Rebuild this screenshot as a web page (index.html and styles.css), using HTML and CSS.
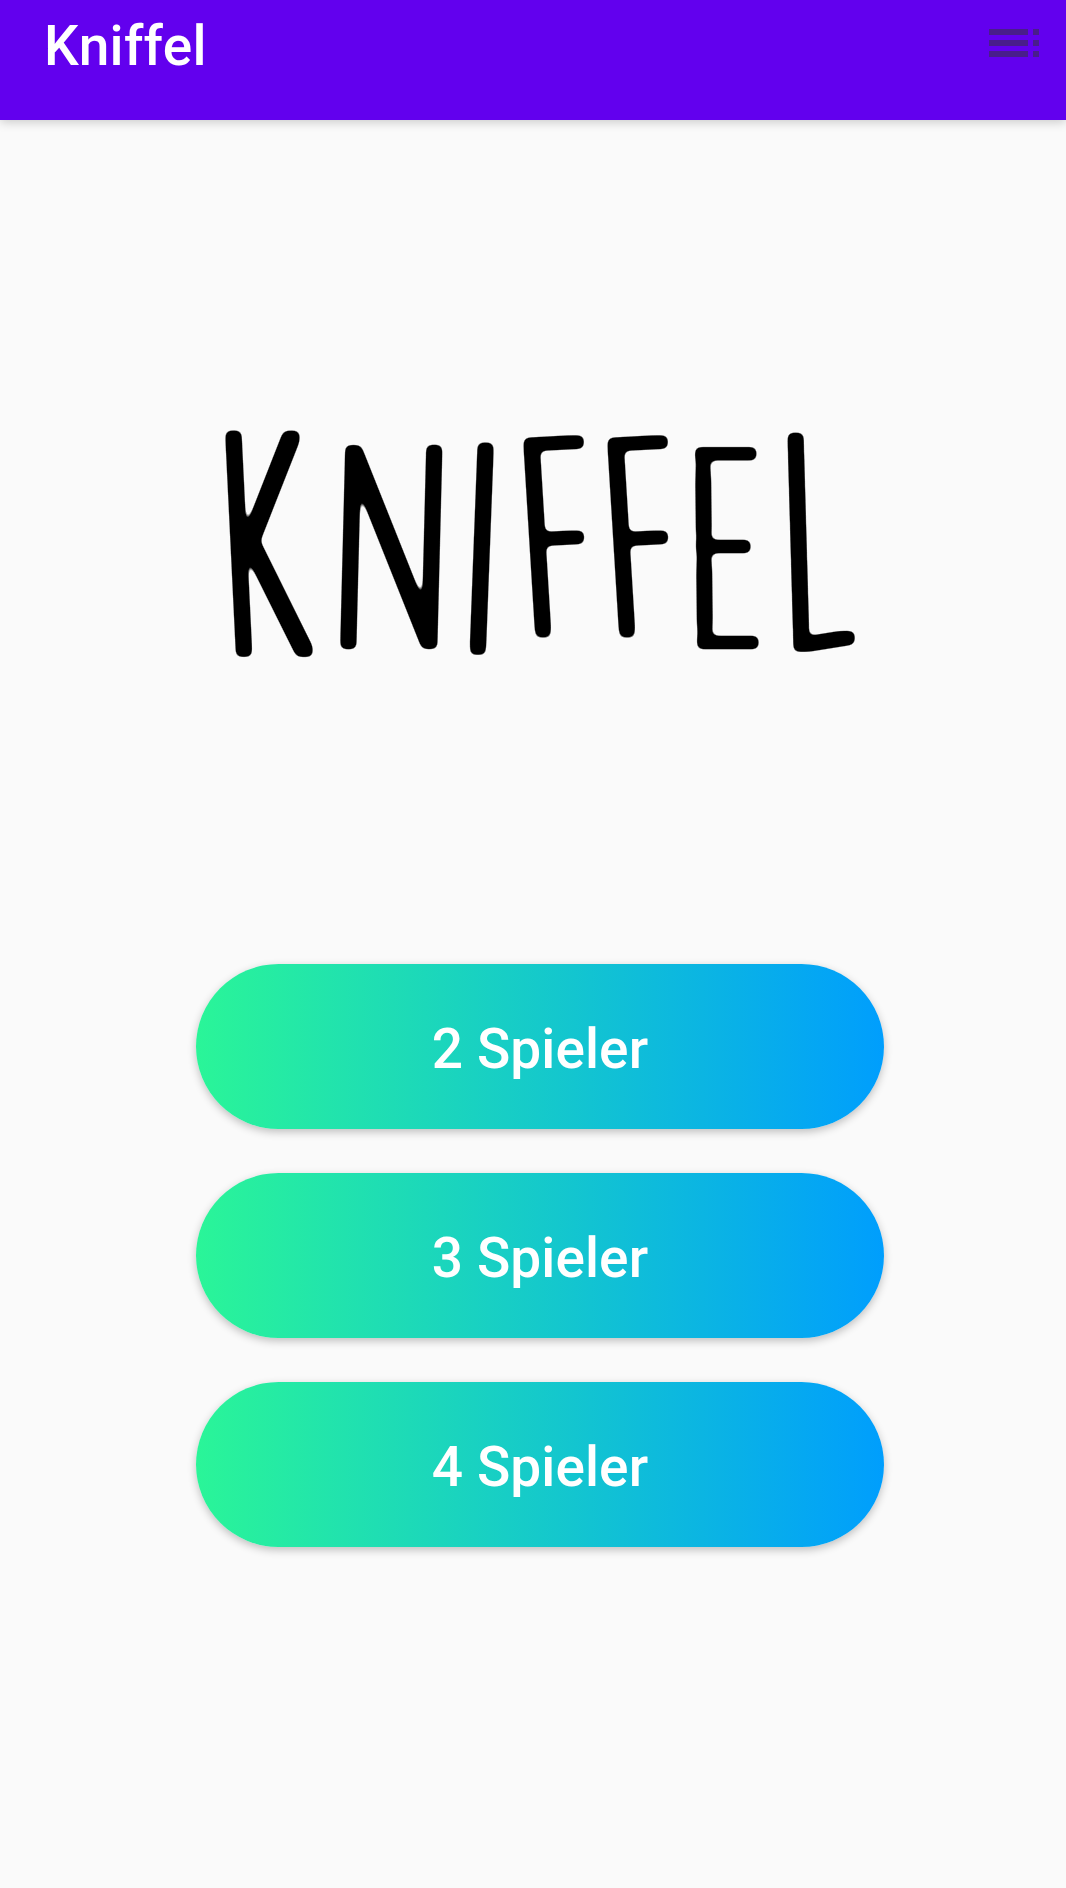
FILE: index.html
```html
<!DOCTYPE html>
<html lang="de">
<head>
<meta charset="utf-8">
<title>Kniffel</title>
<link rel="stylesheet" href="styles.css">
</head>
<body>
<header class="app-bar">
  <span class="app-title">Kniffel</span>
  <svg class="menu-icon" width="50" height="29" viewBox="0 0 50 29" aria-hidden="true">
    <path d="M0 0h39v6H0zM44 0h6v6h-6zM0 11h39v6H0zM44 11h6v6h-6zM0 22h39v6H0zM44 22h6v6h-6z"/>
  </svg>
</header>
<main class="content">
  <h1 class="logo">
    <svg class="logo-art" viewBox="216 417 650 250" width="650" height="250">
      <!-- thickens the hairline letters into a marker stroke with rounded ends -->
      <filter id="marker" filterUnits="userSpaceOnUse" x="206" y="407" width="670" height="270">
        <feMorphology operator="dilate" radius="7 5"/>
        <feGaussianBlur stdDeviation="3.4"/>
        <feComponentTransfer><feFuncA type="linear" slope="7" intercept="-2.8"/></feComponentTransfer>
      </filter>
      <g filter="url(#marker)">
        <text transform="matrix(1.31 0 .15 3.09 228 652)">K</text>
        <text transform="matrix(1.6 0 -.07 2.77 329 644)">N</text>
        <text transform="matrix(1.3 0 -.11 2.89 462 650)">I</text>
        <text transform="matrix(1.12 -.06 .167 2.72 529.5 634)">F</text>
        <text transform="matrix(1.12 -.06 .167 2.72 613.5 634)">F</text>
        <text transform="matrix(1.15 0 .03 2.74 691 644)">E</text>
        <text transform="matrix(1.27 -.2 .084 2.98 786 649)">L</text>
      </g>
    </svg>
  </h1>
  <nav class="players">
    <button class="player-button">2 Spieler</button>
    <button class="player-button">3 Spieler</button>
    <button class="player-button">4 Spieler</button>
  </nav>
</main>
</body>
</html>
```
FILE: styles.css
```css
* { box-sizing: border-box; }

body {
  margin: 0;
  min-height: 1888px;
  background: #fafafa;
  font-family: Roboto, sans-serif;
}

.app-bar {
  display: flex;
  justify-content: space-between;
  height: 120px;
  padding: 14px 27px 0 44px;
  background: #6200ee;
  box-shadow: 0 2px 10px rgba(0, 0, 0, .2);
}

.app-title {
  color: #fff;
  font-size: 55px;
  font-weight: 500;
  line-height: 64px;
  letter-spacing: .3px;
}

.menu-icon {
  margin-top: 15px;
  fill: #491d8b;
}

.logo {
  height: 844px;
  margin: 0;
  padding: 297px 0 0 216px;
}

.logo-art {
  display: block;
  overflow: visible;
}

.logo-art text {
  font: 100 100px Lato, sans-serif;
  fill: #000;
}

.players {
  display: flex;
  flex-direction: column;
  gap: 44px;
  width: 688px;
  margin-left: 196px;
}

.player-button {
  height: 165px;
  padding: 4px 0 0;
  border: 0;
  border-radius: 83px;
  color: #fff;
  font: 500 55px Roboto, sans-serif;
  letter-spacing: .1px;
  background: linear-gradient(90deg, #2af598, #009efd);
  box-shadow: 0 3px 8px rgba(0, 0, 0, .24);
}
```
